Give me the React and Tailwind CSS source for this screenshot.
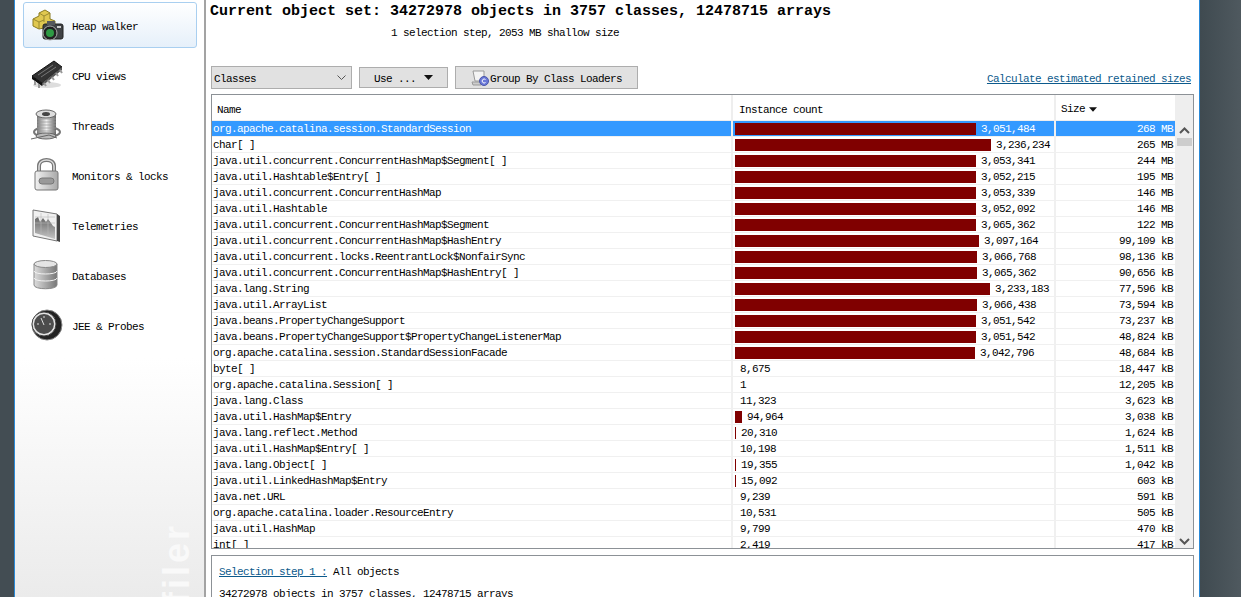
const rows = [
  ['org.apache.catalina.session.StandardSession', '3,051,484', 241, '268 MB'],
  ['char[ ]', '3,236,234', 256, '265 MB'],
  ['java.util.concurrent.ConcurrentHashMap$Segment[ ]', '3,053,341', 241, '244 MB'],
  ['java.util.Hashtable$Entry[ ]', '3,052,215', 241, '195 MB'],
  ['java.util.concurrent.ConcurrentHashMap', '3,053,339', 241, '146 MB'],
  ['java.util.Hashtable', '3,052,092', 241, '146 MB'],
  ['java.util.concurrent.ConcurrentHashMap$Segment', '3,065,362', 241, '122 MB'],
  ['java.util.concurrent.ConcurrentHashMap$HashEntry', '3,097,164', 244, '99,109 kB'],
  ['java.util.concurrent.locks.ReentrantLock$NonfairSync', '3,066,768', 242, '98,136 kB'],
  ['java.util.concurrent.ConcurrentHashMap$HashEntry[ ]', '3,065,362', 242, '90,656 kB'],
  ['java.lang.String', '3,233,183', 255, '77,596 kB'],
  ['java.util.ArrayList', '3,066,438', 242, '73,594 kB'],
  ['java.beans.PropertyChangeSupport', '3,051,542', 241, '73,237 kB'],
  ['java.beans.PropertyChangeSupport$PropertyChangeListenerMap', '3,051,542', 241, '48,824 kB'],
  ['org.apache.catalina.session.StandardSessionFacade', '3,042,796', 240, '48,684 kB'],
  ['byte[ ]', '8,675', 0, '18,447 kB'],
  ['org.apache.catalina.Session[ ]', '1', 0, '12,205 kB'],
  ['java.lang.Class', '11,323', 0, '3,623 kB'],
  ['java.util.HashMap$Entry', '94,964', 7, '3,038 kB'],
  ['java.lang.reflect.Method', '20,310', 1, '1,624 kB'],
  ['java.util.HashMap$Entry[ ]', '10,198', 0, '1,511 kB'],
  ['java.lang.Object[ ]', '19,355', 1, '1,042 kB'],
  ['java.util.LinkedHashMap$Entry', '15,092', 1, '603 kB'],
  ['java.net.URL', '9,239', 0, '591 kB'],
  ['org.apache.catalina.loader.ResourceEntry', '10,531', 0, '505 kB'],
  ['java.util.HashMap', '9,799', 0, '470 kB'],
  ['int[ ]', '2,419', 0, '417 kB'],
];

const HeapIcon = () => (
  <svg width="34" height="34" viewBox="0 0 34 34">
    <path d="M9 5l6-3 5 3v6l5 2v7l-6 3-5-3-5 1-6-3v-7l6-3z" fill="#e0c850" stroke="#8a7a20" />
    <path d="M9 5l5 3 6-3M14 8v6M3 11l6 3v7M9 14l5-2" fill="none" stroke="#9a8a30" />
    <rect x="13" y="16" width="20" height="15" rx="2" fill="#3f4245" stroke="#222" />
    <rect x="17" y="13" width="8" height="4" fill="#55585c" />
    <circle cx="20" cy="25" r="7" fill="#222" stroke="#aaa" />
    <circle cx="20" cy="25" r="4" fill="#2e9a44" />
    <rect x="27" y="18" width="4" height="2" fill="#ccc" />
  </svg>
);

const CpuIcon = () => (
  <svg width="34" height="34" viewBox="0 0 34 34">
    <ellipse cx="17" cy="27" rx="14" ry="3" fill="#ddd" />
    <path d="M2 18L24 3l8 6-20 16z" fill="#333" stroke="#111" />
    <path d="M2 18l10 7v3L2 21z" fill="#111" />
    <path d="M12 25l20-16v3L12 28z" fill="#555" />
    <path d="M8 17L23 7M11 19l15-10" stroke="#777" />
    <path d="M5 23v4M9 26v4M14 25l2 3M18 22l2 3M22 19l2 3M26 15l2 3M30 12l2 3" stroke="#999" strokeWidth="2" />
  </svg>
);

const ThreadIcon = () => (
  <svg width="34" height="34" viewBox="0 0 34 34">
    <defs>
      <linearGradient id="spool" x1="0" x2="1">
        <stop offset="0" stopColor="#777" />
        <stop offset="0.5" stopColor="#f0f0f0" />
        <stop offset="1" stopColor="#666" />
      </linearGradient>
    </defs>
    <ellipse cx="17" cy="24" rx="13" ry="5" fill="none" stroke="#777" strokeWidth="2" />
    <rect x="7" y="6" width="19" height="22" fill="url(#spool)" />
    <path d="M7 11h19M7 14h19M7 17h19M7 20h19M7 23h19" stroke="#999" strokeWidth="0.7" />
    <ellipse cx="16" cy="6" rx="10" ry="4" fill="#ddd" stroke="#666" />
    <ellipse cx="16" cy="6" rx="4" ry="2" fill="#444" />
    <ellipse cx="16" cy="28" rx="10" ry="3" fill="#bbb" stroke="#666" />
    <path d="M1 31l18-4 8 3" fill="none" stroke="#666" />
  </svg>
);

const LockIcon = () => (
  <svg width="34" height="34" viewBox="0 0 34 34">
    <defs>
      <linearGradient id="lockb" x1="0" x2="1">
        <stop offset="0" stopColor="#f2f2f2" />
        <stop offset="1" stopColor="#a8a8a8" />
      </linearGradient>
    </defs>
    <path d="M9 14V8c0-8 15-8 15 0v6" fill="none" stroke="#777" strokeWidth="4" />
    <path d="M9 14V8c0-8 15-8 15 0v6" fill="none" stroke="#ddd" strokeWidth="1.5" />
    <rect x="5" y="13" width="23" height="19" rx="2" fill="url(#lockb)" stroke="#777" />
    <rect x="9" y="20" width="15" height="6" rx="3" fill="#999" stroke="#777" />
  </svg>
);

const TelemetryIcon = () => (
  <svg width="34" height="34" viewBox="0 0 34 34">
    <defs>
      <linearGradient id="telem" x1="0" y1="0" x2="0" y2="1">
        <stop offset="0" stopColor="#666" />
        <stop offset="1" stopColor="#c4c4c4" />
      </linearGradient>
    </defs>
    <path d="M3 2l24 4v27L3 28z" fill="#f0f0f0" stroke="#777" />
    <path d="M27 6l3 2v26l-3-1z" fill="#444" />
    <path d="M5 25V11l3-2 2 5 3-4 3 4 2-3 3 4 2 3 2 1v12z" fill="url(#telem)" />
    <path d="M5 9h20M5 15h20M11 5v22M18 6v22" stroke="#bbb" strokeWidth="0.6" />
  </svg>
);

const DbIcon = () => (
  <svg width="34" height="34" viewBox="0 0 34 34">
    <defs>
      <linearGradient id="dbb" x1="0" x2="1">
        <stop offset="0" stopColor="#ddd" />
        <stop offset="0.5" stopColor="#aaa" />
        <stop offset="1" stopColor="#777" />
      </linearGradient>
    </defs>
    <path d="M4 6v21c0 5 23 5 23 0V6z" fill="url(#dbb)" stroke="#888" />
    <ellipse cx="15.500" cy="6" rx="11.500" ry="3.500" fill="#e4e4e4" stroke="#888" />
    <path d="M4 13c0 4 23 4 23 0M4 20c0 4 23 4 23 0" fill="none" stroke="#f2f2f2" />
  </svg>
);

const ProbeIcon = () => (
  <svg width="34" height="34" viewBox="0 0 34 34">
    <circle cx="17" cy="17" r="15" fill="#222" stroke="#888" />
    <circle cx="14" cy="16" r="12" fill="#e4e4e4" stroke="#444" />
    <circle cx="14" cy="16" r="10" fill="#4c4c4c" />
    <path d="M14 17l-3-7M7 16h2M19 16h2M14 8v2" stroke="#ddd" />
  </svg>
);

const navItems = [
  ['Heap walker', HeapIcon],
  ['CPU views', CpuIcon],
  ['Threads', ThreadIcon],
  ['Monitors & locks', LockIcon],
  ['Telemetries', TelemetryIcon],
  ['Databases', DbIcon],
  ['JEE & Probes', ProbeIcon],
];

const Chevron = ({ up }) => (
  <svg width="11" height="7" viewBox="0 0 11 7">
    <path d={up ? 'M1 6l4.500-4.500L10 6' : 'M1 1l4.500 4.500L10 1'} fill="none" stroke="#555" strokeWidth="2" />
  </svg>
);

const Caret = ({ w = 9 }) => (
  <svg width={w} height="5" viewBox="0 0 9 5">
    <path d="M0 0h9L4.500 5z" fill="#111" />
  </svg>
);

export default function App() {
  return (
    <div className="relative flex h-[597px] w-[1241px] overflow-hidden bg-gradient-to-r from-[#3f4a50] to-[#4b555b] font-['Liberation_Mono',monospace] text-[11px] tracking-[-0.6px] text-black">
      <div className="w-[14px] bg-[#434d53]" />

      {/* sidebar */}
      <div className="relative w-[192px] shrink-0 overflow-hidden border-l border-l-[#2a8ad8] border-r-2 border-r-[#a3a3a3] bg-gradient-to-b from-white from-60% to-[#ebebeb]">
        <div className="flex flex-col pl-2 pr-2 pt-[2px]">
          {navItems.map(([label, Icon], i) => (
            <div
              key={label}
              className={
                i === 0
                  ? 'flex h-[46px] w-[174px] items-center gap-[8px] rounded-[3px] border border-[#a9cff0] bg-gradient-to-b from-white to-[#e6f0fa] pl-[6px]'
                  : 'mt-[4px] flex h-[46px] w-[174px] items-center gap-[8px] border border-transparent pl-[6px]'
              }
            >
              <Icon />
              <span className="whitespace-nowrap pt-[4px]">{label}</span>
            </div>
          ))}
        </div>
        <div className="absolute left-[144px] top-[523px] rotate-180 whitespace-nowrap font-['Liberation_Sans',sans-serif] text-[36px] font-bold leading-none tracking-[3px] text-[#f9f9f9] [writing-mode:vertical-rl]">
          JProfiler
        </div>
      </div>

      {/* main */}
      <div className="flex w-[993px] shrink-0 flex-col bg-white pl-[5px] pr-[4px]">
        <div className="h-[66px] shrink-0">
          <div className="-ml-[1px] h-[26px] pt-[3px] text-[15px] font-bold leading-[18px] tracking-normal">
            Current object set: 34272978 objects in 3757 classes, 12478715 arrays
          </div>
          <div className="pl-[180px] leading-[14px]">1 selection step, 2053 MB shallow size</div>
        </div>

        <div className="flex h-[23px] shrink-0 items-center">
          <div className="flex h-[23px] w-[141px] items-center justify-between border border-[#adadad] bg-[#e1e1e1] pl-[2px] pr-[5px]">
            <span className="pt-[4px]">Classes</span>
            <svg width="9" height="6" viewBox="0 0 9 6">
              <path d="M0.500 0.500l4 4 4-4" fill="none" stroke="#555" />
            </svg>
          </div>
          <div className="ml-[7px] flex h-[21px] w-[89px] items-center justify-center gap-[8px] border border-[#adadad] bg-[#e1e1e1]">
            <span className="pt-[4px]">Use ...</span>
            <Caret />
          </div>
          <div className="ml-[7px] flex h-[23px] w-[183px] items-center justify-center gap-[1px] border border-[#adadad] bg-[#e1e1e1]">
            <svg width="18" height="16" viewBox="0 0 18 16">
              <path d="M2 1h11v10H4z" fill="#f4f4f4" stroke="#999" />
              <path d="M1 12h9v3H2z" fill="#ccc" stroke="#999" />
              <circle cx="13" cy="11" r="4.500" fill="#6a78d8" stroke="#4a56a8" />
              <path d="M14.500 9.500a2 2 0 1 0 0 3" fill="none" stroke="#fff" />
            </svg>
            <span className="pt-[4px]">Group By Class Loaders</span>
          </div>
          <a className="ml-auto mt-[4px] pr-[4px] text-[#0c5a8c] underline">Calculate estimated retained sizes</a>
        </div>

        {/* table */}
        <div className="mt-[5px] flex h-[455px] w-[983px] shrink-0 overflow-hidden border border-[#8c9196]">
          <div className="min-w-0 flex-1">
            <div className="flex h-[26px] items-center border-b border-[#eeeeee]">
              <div className="h-full w-[521px] border-r-2 border-[#eeeeee] pl-[5px] leading-[30px]">Name</div>
              <div className="h-full w-[323px] border-r-2 border-[#eeeeee] pl-[6px] leading-[30px]">Instance count</div>
              <div className="flex h-full flex-1 items-center gap-[4px] pl-[5px] pt-[4px]">
                <span>Size</span>
                <Caret w={8} />
              </div>
            </div>
            {rows.map(([name, count, bar, size], i) => (
              <div
                key={name}
                className={
                  i === 0
                    ? 'flex h-4 items-center overflow-hidden border-b border-[#f0f0f0] bg-[#3399ff] text-white'
                    : 'flex h-4 items-center overflow-hidden border-b border-[#f0f0f0]'
                }
              >
                <div className="h-full w-[521px] shrink-0 whitespace-nowrap border-r-2 border-[#f0f0f0] pl-[1px] leading-[17px]">{name}</div>
                <div className="flex h-full w-[323px] shrink-0 items-center border-r-2 border-[#f0f0f0] pl-[2px]">
                  {bar > 0 ? (
                    <div className="mr-[5px] h-[12px] shrink-0 bg-[#800000]" style={{ width: bar }} />
                  ) : (
                    <div className="w-[5px] shrink-0" />
                  )}
                  <span className="pt-[2px]">{count}</span>
                </div>
                <div className="h-full flex-1 whitespace-nowrap pr-[2px] text-right leading-[17px]">{size}</div>
              </div>
            ))}
          </div>
          <div className="flex w-[18px] shrink-0 flex-col items-center bg-[#eeeeee] pt-[32px]">
            <Chevron up />
            <div className="mt-[4px] h-[8px] w-[15px] bg-[#cdcdcd]" />
            <div className="mt-auto pb-[3px]">
              <Chevron />
            </div>
          </div>
        </div>

        {/* selection steps */}
        <div className="mt-[6px] w-[983px] flex-1 border border-b-0 border-[#8c9196] pl-[7px] pt-[9px]">
          <div className="leading-[14px]">
            <a className="text-[#0c5a8c] underline">Selection step 1 :</a> All objects
          </div>
          <div className="mt-[8px] leading-[14px]">34272978 objects in 3757 classes, 12478715 arrays</div>
        </div>
      </div>

      <div className="flex-1 border-l border-[#2a8ad8] bg-gradient-to-r from-[#3f4a50] to-[#4f595f]" />
    </div>
  );
}
